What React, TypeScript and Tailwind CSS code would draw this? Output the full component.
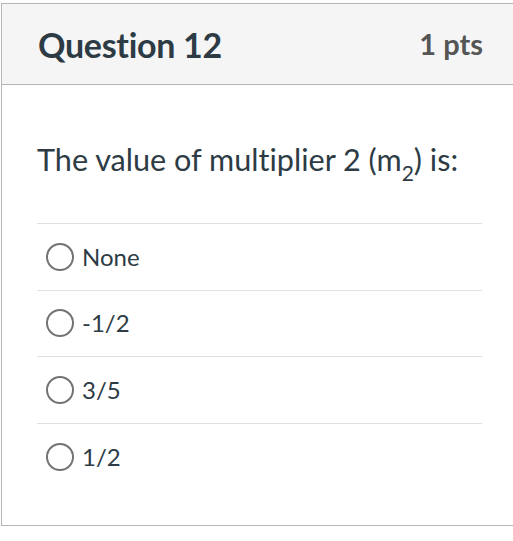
import React from 'react';

const answers = ['None', '-1/2', '3/5', '1/2'];

export default function App() {
  return (
    <div
      className="min-h-[541px] w-[513px] overflow-hidden bg-white pt-[3px] pl-[1px] [font-variant-ligatures:none]"
      style={{ fontFamily: 'Lato, "Open Sans", sans-serif' }}
    >
      <div className="w-[540px] border border-[#b5b5b5] h-[523px]">
        <div className="h-[81px] bg-[#f5f5f5] border-b border-[#b5b5b5] pl-[36px] flex items-center">
          <div className="w-[445px] flex items-center justify-between">
            <h2 className="text-[34px] font-bold text-[#2d3b45] tracking-[-0.3px]">Question 12</h2>
            <span className="text-[29px] font-bold text-[#555555]">1 pts</span>
          </div>
        </div>

        <div className="pl-[35px] w-[480px]">
          <p className="pt-[56px] pb-[44px] text-[30.6px] leading-[38px] text-[#2d3b45]">
            The value of multiplier 2 (m<sub className="text-[21px] align-[-5px]">2</sub>) is:
          </p>
          <div className="border-t border-[#e0e0e0]">
            {answers.map((a, i) => (
              <div
                key={a}
                className={`h-[66.5px] flex items-center gap-[8px] pl-[9px] ${i < answers.length - 1 ? 'border-b border-[#e0e0e0]' : ''}`}
              >
                <span className="w-[28px] h-[28px] rounded-full border-2 border-[#737373] bg-white" />
                <span className="text-[24px] text-[#2d3b45]">{a}</span>
              </div>
            ))}
          </div>
        </div>
      </div>
    </div>
  );
}
